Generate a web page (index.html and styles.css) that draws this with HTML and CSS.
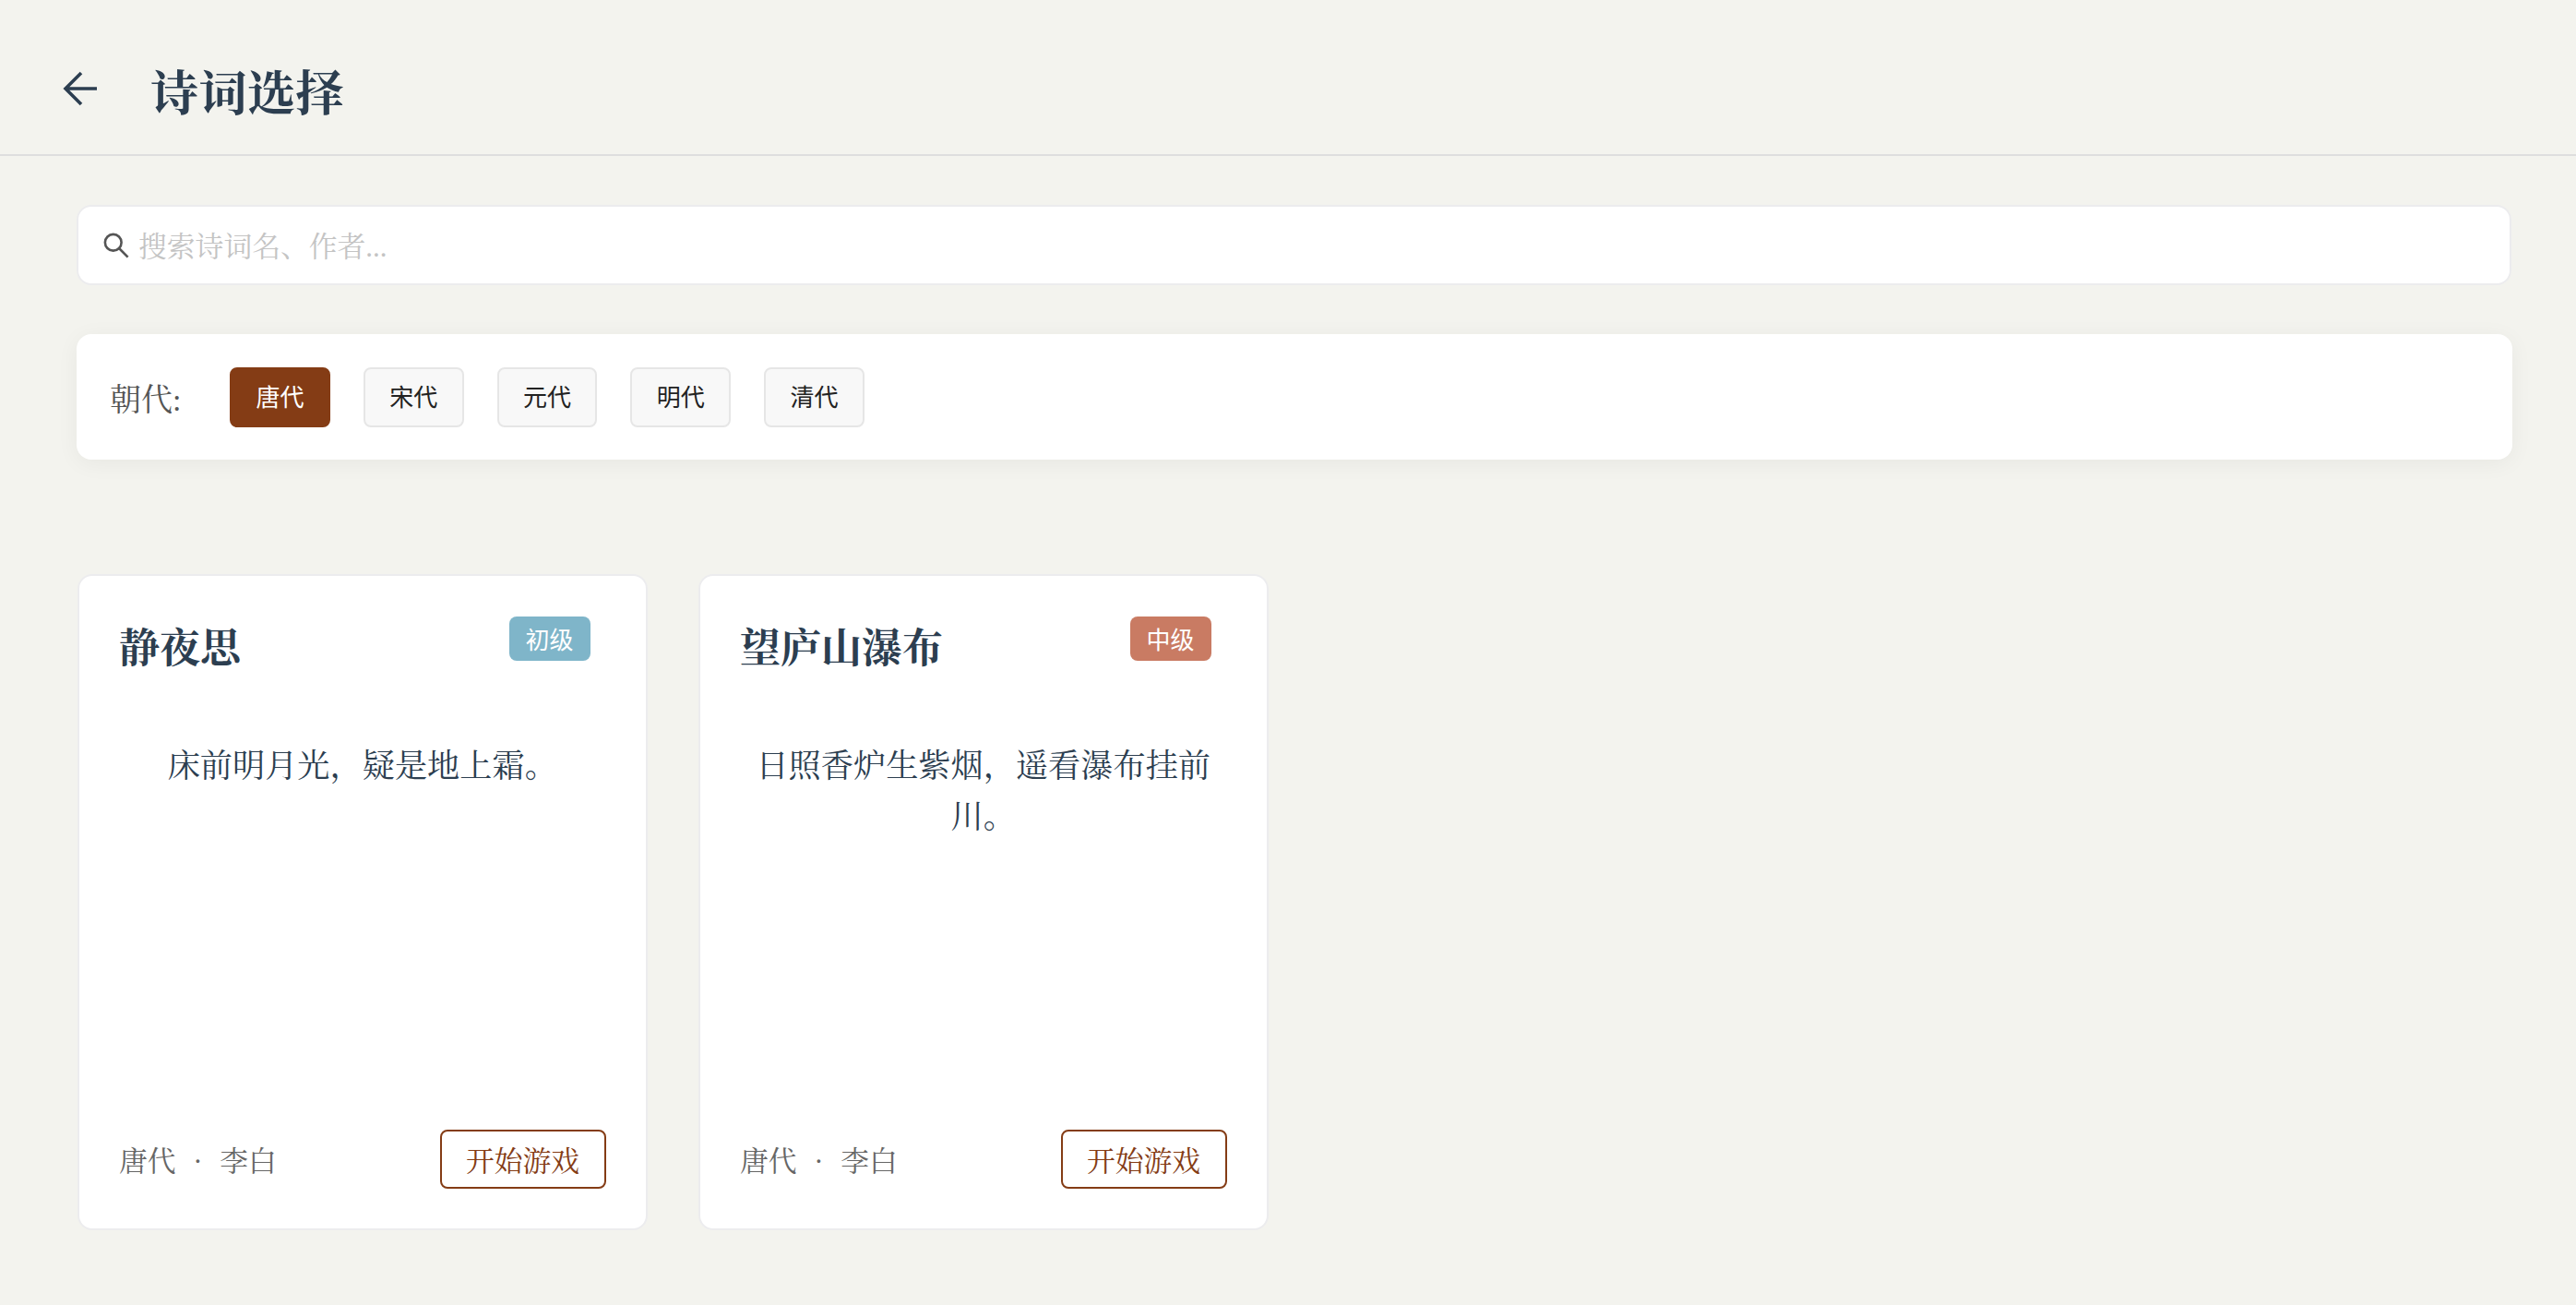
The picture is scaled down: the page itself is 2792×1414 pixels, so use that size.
FILE: index.html
```html
<!DOCTYPE html>
<html lang="zh-CN">
<head>
<meta charset="utf-8">
<title>诗词选择</title>
<link rel="stylesheet" href="styles.css">
</head>
<body>
<header class="top">
  <button class="back" aria-label="返回">
    <svg width="37" height="38" viewBox="0 0 37 38" fill="none" stroke="#2c3e50" stroke-width="3.6"><path d="M37 19H3M20 2 3 19l17 17"/></svg>
  </button>
  <h1 class="page-title">诗词选择</h1>
</header>
<main class="main">
  <div class="search">
    <svg class="search-icon" width="28" height="28" viewBox="0 0 30 30" fill="none" stroke="#555" stroke-width="2.8"><circle cx="11.5" cy="11.5" r="9.5"/><path d="m18.5 18.5 10 10"/></svg>
    <input class="search-input" placeholder="搜索诗词名、作者...">
  </div>
  <section class="filter">
    <span class="filter-label">朝代:</span>
    <div class="filter-list">
      <button class="chip chip-active">唐代</button>
      <button class="chip">宋代</button>
      <button class="chip">元代</button>
      <button class="chip">明代</button>
      <button class="chip">清代</button>
    </div>
  </section>
  <section class="cards">
    <article class="card">
      <div class="card-head">
        <h2 class="card-title">静夜思</h2>
        <span class="badge badge-easy">初级</span>
      </div>
      <p class="poem">床前明月光，疑是地上霜。</p>
      <div class="card-foot">
        <span class="meta">唐代 · 李白</span>
        <button class="start">开始游戏</button>
      </div>
    </article>
    <article class="card">
      <div class="card-head">
        <h2 class="card-title">望庐山瀑布</h2>
        <span class="badge badge-mid">中级</span>
      </div>
      <p class="poem">日照香炉生紫烟，遥看瀑布挂前川。</p>
      <div class="card-foot">
        <span class="meta">唐代 · 李白</span>
        <button class="start">开始游戏</button>
      </div>
    </article>
  </section>
</main>
</body>
</html>
```
FILE: styles.css
```css
* { box-sizing: border-box; }
html, body { margin: 0; height: 100%; }
body {
  background: #f3f3ee;
  color: #2c3e50;
  font-family: "Liberation Serif", "Noto Serif CJK SC", serif;
  overflow: hidden;
}
button { font-family: inherit; cursor: pointer; }

.top {
  display: flex;
  align-items: center;
  height: 169px;
  padding: 38px 0 0 68px;
  border-bottom: 2px solid #dedede;
}
.back {
  display: flex;
  background: none;
  border: 0;
  padding: 0;
  margin: -14px 58px 0 0;
}
.page-title { margin: 0; font-size: 52.4px; font-weight: 700; line-height: 1.5; }

.main { padding: 53px 70px 0 83px; }

.search {
  display: flex;
  align-items: center;
  height: 87px;
  padding: 0 27px;
  gap: 10px;
  background: #fff;
  border: 2px solid #ececee;
  border-radius: 16px;
}
.search-icon { flex: none; }
.search-input {
  flex: 1;
  border: 0;
  outline: 0;
  padding: 6px 0 0;
  background: none;
  font-family: inherit;
  font-size: 30.8px;
  color: #2c3e50;
}
.search-input::placeholder { color: #c4c4c4; opacity: 1; }

.filter {
  display: flex;
  align-items: center;
  height: 136px;
  margin: 53px -1px 0 0;
  padding: 0 36px;
  background: #fff;
  border-radius: 16px;
  box-shadow: 0 4px 24px rgba(0, 0, 0, .05);
}
.filter-label { font-size: 34px; color: #555; width: 130px; }
.filter-list { display: flex; gap: 36px; }
.chip {
  width: 108.8px;
  height: 65px;
  padding: 0 0 4px;
  font-family: "Noto Sans CJK SC", sans-serif;
  font-size: 26px;
  color: #222;
  background: #f8f8f8;
  border: 2px solid #e6e6e6;
  border-radius: 8px;
}
.chip-active { background: #843c15; border-color: #843c15; color: #fff; }

.cards {
  display: grid;
  grid-template-columns: repeat(2, 617.5px);
  gap: 55.5px;
  margin: 124px 0 0 1px;
}
.card {
  display: flex;
  flex-direction: column;
  height: 711px;
  padding: 44px 43px 43px;
  background: #fff;
  border: 2px solid #ececee;
  border-radius: 16px;
}
.card-head { display: flex; justify-content: space-between; align-items: flex-start; }
.card-title { margin: 0; font-size: 44px; font-weight: 700; line-height: 72px; }
.badge {
  margin-right: 17px;
  width: 88px;
  height: 48px;
  line-height: 48px;
  text-align: center;
  font-family: "Noto Sans CJK SC", sans-serif;
  font-size: 26px;
  color: #fff;
  border-radius: 8px;
}
.badge-easy { background: #7fb5c9; }
.badge-mid { background: #c97b63; }

.poem {
  flex: 1;
  margin: 63px 0 0;
  font-size: 35.2px;
  line-height: 55px;
  text-align: center;
}
.card-foot { display: flex; justify-content: space-between; align-items: center; }
.meta { font-size: 30.8px; color: #666; word-spacing: 11px; }
.start {
  width: 180px;
  height: 64px;
  padding: 0;
  font-size: 30.8px;
  color: #843c15;
  background: #fff;
  border: 2px solid #843c15;
  border-radius: 8px;
}
```
